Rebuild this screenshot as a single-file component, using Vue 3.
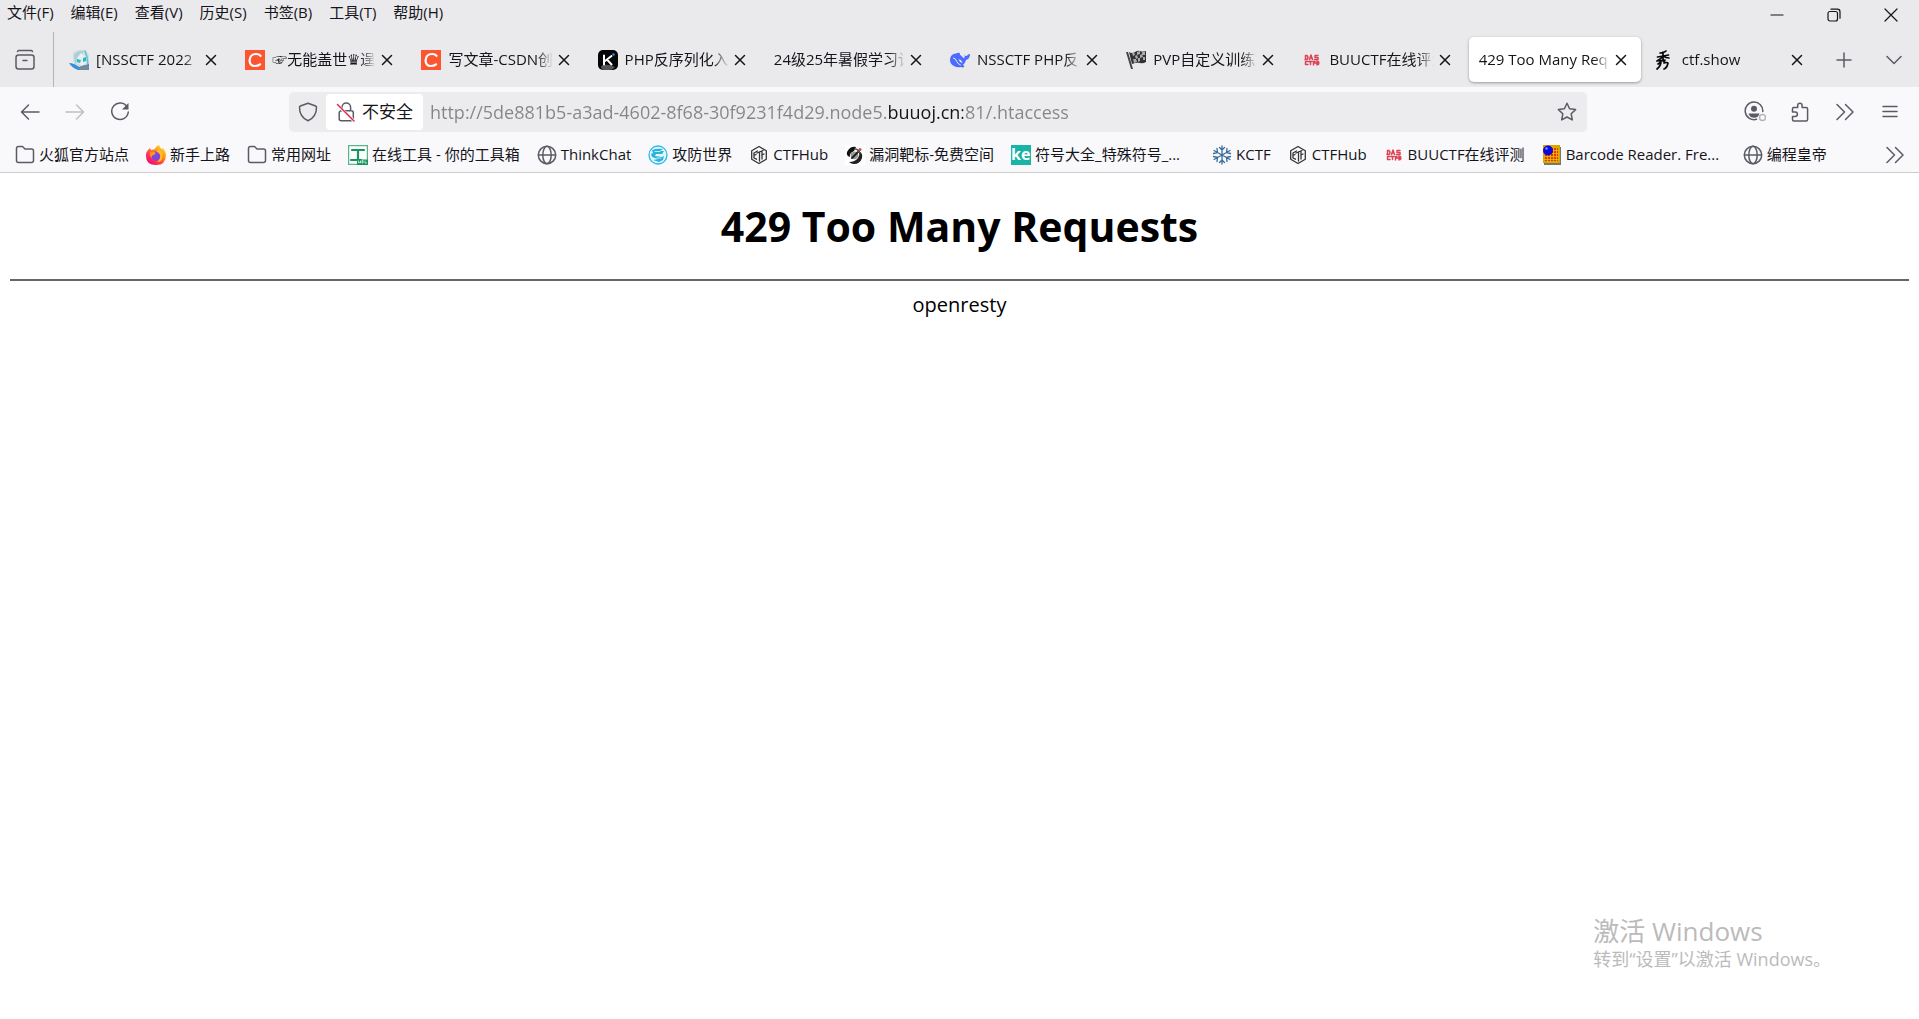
<template>
  <div class="browser">
    <header class="top">
      <div class="menubar">
        <nav class="menus" aria-label="菜单">
          <button v-for="m in menus" :key="m" type="button">{{ m }}</button>
        </nav>
        <div class="window-controls">
          <button type="button" aria-label="最小化">
            <svg width="14" height="14" viewBox="0 0 14 14"><path d="M1 7h12" /></svg>
          </button>
          <button type="button" aria-label="还原">
            <svg width="14" height="14" viewBox="0 0 14 14"><rect x="1" y="3.500" width="9.500" height="9.500" rx="2" /><path d="M4 1.200h6.300a2.700 2.700 0 0 1 2.700 2.700v6.300" /></svg>
          </button>
          <button type="button" aria-label="关闭">
            <svg width="14" height="14" viewBox="0 0 14 14"><path d="M1 1l12 12M13 1L1 13" /></svg>
          </button>
        </div>
      </div>

      <div class="tabstrip">
        <button class="firefox-view" type="button" aria-label="Firefox View">
          <svg width="22" height="22" viewBox="0 0 22 22"><path d="M3.500 2.500Q4 1.500 5 1.500h12q1 0 1.500 1" /><rect x="2" y="6" width="18" height="14" rx="2.500" /><path d="M9 11.500h4" /></svg>
        </button>
        <div class="tabs" role="tablist">
          <div v-for="t in tabs" :key="t.title" class="tab" :class="{ active: t.active }">
            <button class="tab-main" type="button" role="tab" :aria-selected="!!t.active">
              <svg v-if="t.icon" class="favicon" width="20" height="20" viewBox="0 0 20 20" v-html="icons[t.icon]" />
              <span class="tab-label">{{ t.title }}</span>
            </button>
            <button class="tab-close" type="button" aria-label="关闭标签页">
              <svg width="12" height="12" viewBox="0 0 12 12"><path d="M1.500 1.500l9 9M10.500 1.500l-9 9" /></svg>
            </button>
          </div>
        </div>
        <button class="strip-btn" type="button" aria-label="新建标签页">
          <svg width="16" height="16" viewBox="0 0 16 16"><path d="M8 1v14M1 8h14" /></svg>
        </button>
        <button class="strip-btn" type="button" aria-label="列出所有标签页">
          <svg width="16" height="16" viewBox="0 0 16 16"><path d="M1 4.500l7 7 7-7" /></svg>
        </button>
      </div>
    </header>

    <div class="toolbar">
      <div class="nav">
        <div class="nav-left">
          <button type="button" aria-label="后退">
            <svg width="20" height="20" viewBox="0 0 20 20"><path d="M19 10H2M8.500 3L1.500 10l7 7" /></svg>
          </button>
          <button type="button" aria-label="前进" disabled>
            <svg width="20" height="20" viewBox="0 0 20 20"><path d="M1 10h17M11.500 3l7 7-7 7" /></svg>
          </button>
          <button type="button" aria-label="刷新">
            <svg width="20" height="20" viewBox="0 0 20 20"><path d="M17.200 5A8.300 8.300 0 1 0 18.300 10" /><path d="M18.500 1v6.500H12z" fill="currentColor" stroke="none" /></svg>
          </button>
        </div>
        <div class="urlbar">
          <button class="shield" type="button" aria-label="跟踪保护">
            <svg width="20" height="20" viewBox="0 0 20 20"><path d="M10 1.200L17.600 4c.7.300.9.700.9 1.400 0 6-2.500 10.500-8.500 13.400C4 15.900 1.500 11.400 1.500 5.400c0-.7.200-1.100.9-1.400z" /></svg>
          </button>
          <button class="insecure" type="button">
            <svg width="20" height="20" viewBox="0 0 20 20"><path d="M6 8.500V5.200a4.300 4.300 0 0 1 8.600 0v3.300M4.500 8.800h10.800a2 2 0 0 1 2 2v6a2 2 0 0 1-2 2H5.200a2 2 0 0 1-2-2v-6q0-1 1.300-2z" /><path d="M1.500 3l16.500 16" stroke="#fff" stroke-width="3" /><path d="M1.500 2.500L18 19" stroke="#e22850" /></svg>
            <span>不安全</span>
          </button>
          <input class="url" type="text" aria-label="网址" value="http://5de881b5-a3ad-4602-8f68-30f9231f4d29.node5.buuoj.cn:81/.htaccess" />
          <button class="star" type="button" aria-label="添加书签">
            <svg width="20" height="20" viewBox="0 0 20 20"><path d="M10 1.300l2.600 5.500 6 .8-4.400 4.200 1.100 6.100L10 15l-5.300 2.900 1.100-6.100L1.400 7.600l6-.8z" /></svg>
          </button>
        </div>
        <div class="nav-right">
          <button type="button" aria-label="账户">
            <svg width="22" height="22" viewBox="0 0 22 22"><path d="M12.500 18.300A8.800 8.800 0 1 1 18.800 10.500" /><circle cx="10" cy="7.800" r="3" fill="currentColor" stroke="none" /><path d="M4.500 12.500h11q-1 4.200-5.500 4.200T4.500 12.500z" fill="currentColor" stroke="none" /><circle cx="18.500" cy="16.500" r="3" stroke="#b5b5ba" /></svg>
          </button>
          <button type="button" aria-label="扩展">
            <svg width="20" height="20" viewBox="0 0 20 20"><path d="M3.500 5.500h4.200V3.500a2.200 2.200 0 0 1 4.400 0v2h4q1.500 0 1.500 1.500v10.500q0 1.500-1.500 1.500H4Q2.500 19 2.500 17.500v-3h2.700a2.200 2.200 0 0 0 0-4.400H2.500V7q0-1.500 1-1.500z" /></svg>
          </button>
          <button type="button" aria-label="更多工具">
            <svg width="20" height="20" viewBox="0 0 20 20"><path d="M2 2.500L9.500 10 2 17.500M10.500 2.500L18 10l-7.500 7.500" /></svg>
          </button>
          <button type="button" aria-label="应用程序菜单">
            <svg width="20" height="20" viewBox="0 0 20 20"><path d="M3 4.500h14M3 9.500h14M3 14.500h14" /></svg>
          </button>
        </div>
      </div>

      <div class="bookmarks">
        <a v-for="(b, i) in bookmarks" :key="i" href="#" :class="{ cut: b.cut }">
          <svg class="favicon" width="20" height="20" viewBox="0 0 20 20" v-html="icons[b.icon]" />
          <span>{{ b.title }}</span>
        </a>
        <button type="button" aria-label="更多书签">
          <svg width="20" height="20" viewBox="0 0 20 20"><path d="M2 2.500L9.500 10 2 17.500M10.500 2.500L18 10l-7.500 7.500" /></svg>
        </button>
      </div>
    </div>

    <main class="page">
      <h1>429 Too Many Requests</h1>
      <hr>
      <p>openresty</p>
    </main>

    <aside class="activate">
      <div class="activate-title">激活 Windows</div>
      <div class="activate-hint">转到“设置”以激活 Windows。</div>
    </aside>
  </div>
</template>

<script setup>
const menus = ['文件(F)', '编辑(E)', '查看(V)', '历史(S)', '书签(B)', '工具(T)', '帮助(H)']

const tabs = [
  { title: '[NSSCTF 2022', icon: 'anime' },
  { title: '☞无能盖世♛逞何', icon: 'csdn' },
  { title: '写文章-CSDN创', icon: 'csdn' },
  { title: 'PHP反序列化入', icon: 'k' },
  { title: '24级25年暑假学习计' },
  { title: 'NSSCTF PHP反', icon: 'whale' },
  { title: 'PVP自定义训练场', icon: 'flag' },
  { title: 'BUUCTF在线评测', icon: 'das' },
  { title: '429 Too Many Req', active: true },
  { title: 'ctf.show', icon: 'show' }
]

const bookmarks = [
  { title: '火狐官方站点', icon: 'folder' },
  { title: '新手上路', icon: 'firefox' },
  { title: '常用网址', icon: 'folder' },
  { title: '在线工具 - 你的工具箱', icon: 'tool' },
  { title: 'ThinkChat', icon: 'globe' },
  { title: '攻防世界', icon: 'xctf' },
  { title: 'CTFHub', icon: 'hub' },
  { title: '漏洞靶标-免费空间', icon: 'target' },
  { title: '符号大全_特殊符号_...', icon: 'ke', cut: true },
  { title: 'KCTF', icon: 'snow' },
  { title: 'CTFHub', icon: 'hub' },
  { title: 'BUUCTF在线评测', icon: 'das' },
  { title: 'Barcode Reader. Fre...', icon: 'barcode', cut: true },
  { title: '编程皇帝', icon: 'globe' }
]

const icons = {
  anime: '<path d="M4 3Q8-1 17 0l3 5v15H9Q3 14 4 3z" fill="#cfdede"/><path d="M5 5q4-5 10-4l-3 6-6 7z" fill="#b0cfd5"/><path d="M8 8l4-5 5 4v6l-4 3-5-4z" fill="#e8efef"/><path d="M8 9l4 1-1 3-3-1zM14 8l3-1v4l-3 1z" fill="#27b8cb"/><path d="M16 1l2 6 1 8" stroke="#62c4d0" fill="none"/><path d="M0 13q5 0 10 4l10-3v6H9Q3 18 0 13z" fill="#398ed8"/><path d="M10 17l6-2 4 1v4h-9z" fill="#778a9a"/>',
  csdn: '<path d="M0 0h20v20H0z" fill="#fc5531"/><path d="M15.500 5.800Q14 4 11 4C7 4 4.800 6.900 4.600 10.300 4.400 13.800 6.500 16 10 16q3 0 5-1.700" fill="none" stroke="#fff" stroke-width="2.200"/>',
  k: '<rect width="20" height="20" rx="5" fill="#050505"/><path d="M3 16q6-3 14 1-2 3-6 3H6q-3 0-3-4z" fill="#555"/><path d="M6 5.500v9M13.500 6L7 11M9 9.500l4.500 5" fill="none" stroke="#fff" stroke-width="2"/><circle cx="15.500" cy="4.500" r="1.300" fill="#2c85f4"/>',
  whale: '<path d="M0 10Q0 4 6 3.500q2-1 4-.5-1 1.500 1 2.500l3 3q1-1 .5-4 .5 2 2 1.500Q18 4 20 4q0 5-4 6-1 3.500-3 5l1.500 1.500Q13 18 11 17q-4 1-7-1-4-2-4-6z" fill="#4d6bfe"/><path d="M1.500 8q3 0 4.500 3t4 4q-2 1-4 0-5-2-4.500-7z" fill="#4d6bfe"/><path d="M8.500 9.500q3-.5 4 3.500-3-.5-4-3.500z" fill="#eaeaec"/><path d="M3.500 8q2 0 3 3t4 4" fill="none" stroke="#eaeaec" stroke-width="1"/>',
  flag: '<path d="M0 2h2l5 17H5z" fill="#444"/><path d="M3 2q3 2 6 0t5-1 6 0v11q-3 2-6 1t-8 1z" fill="#333"/><path d="M6 3l2-1 1 3-2 1zm5-1 3-1v3l-3 1zm5 0 3 0v3h-3zM9 6l2-1 1 3-2 1zm5-1 2-1 1 3-3 1zM7 9l3 0 1 3-3 1zm5-1 2 0v3l-2 1zm5-1 2 0v3h-2z" fill="#aaa"/>',
  das: '<g fill="none" stroke="#dc4355"><path d="M3.500 5.500v4M3.500 5.500h1.500q2 2 0 4H3M7.500 9.500L9 5l1.500 4.500M8 8h2M16 5.500h-3v2h3v2h-3.500M6 11.500H3.500v3H6M7 11.500h3M8.500 11.500v3M11.500 15v-3.500h1.500M11.500 13h1.500M15 11v4M16.500 11.500v3M13.500 13h3.500"/></g>',
  show: '<g fill="none" stroke="#080808" stroke-width="1.700"><path d="M5 3q4 0 6-2M2.500 7q6-1 11-2M8 2v9M8 6q-2 3-6 5M8 6q3 2 6 2M4 11q4-1 6-1-1 2-1 3 3-1 4 0-1 5-4 6M6 11q0 5-4 8M3 14l3-2"/></g>',
  folder: '<path d="M1.500 15.500v-12q0-2 2-2h4l2.500 2.500h6.500q2 0 2 2v9.500q0 2-2 2h-13q-2 0-2-2z" fill="none" stroke="#5b5b66" stroke-width="1.500"/>',
  firefox: '<defs><linearGradient id="ff" x1="1" y1="0" x2=".2" y2="1"><stop stop-color="#fff44f"/><stop offset=".4" stop-color="#ff980e"/><stop offset=".7" stop-color="#ff3750"/><stop offset="1" stop-color="#eb0878"/></linearGradient></defs><path d="M2 5l2-2 1 2 4-1q0-2 4-4 1 3 3 4l1-1q3 4 3 7 0 10-10 10T0 11q0-4 2-6z" fill="url(#ff)"/><circle cx="10" cy="11" r="4.700" fill="#8044dc"/><path d="M4 7q3-1 6 1l-2 2q-3 0-2 3-3-2-2-6z" fill="#ff9524"/><path d="M13 4q5 4 3 10-1 3-5 3 4-3 3-7-1-3-4-3z" fill="#ffbd27"/>',
  tool: '<rect x=".5" y=".5" width="19" height="19" fill="#fff" stroke="#5ab58d"/><path d="M4 5h12M10 5v10M3 15h10" fill="none" stroke="#189660" stroke-width="2.200"/><path d="M9 14.500h11V20H9z" fill="#189660"/><path d="M10.500 16v2l1-1 1 1v-2M14 16v2h1v-2zM17 16v2h1.500" fill="none" stroke="#fff" stroke-width=".7"/>',
  globe: '<g fill="none" stroke="#5b5b66" stroke-width="1.500"><circle cx="10" cy="10" r="8.700"/><ellipse cx="10" cy="10" rx="4.200" ry="8.700"/><path d="M1.500 10h17"/></g>',
  xctf: '<circle cx="10" cy="10" r="9.500" fill="#e6f7fc"/><circle cx="10" cy="10" r="9" fill="none" stroke="#2eb9e6" stroke-width="1.300"/><path d="M4 5q5-2 11-1l-3 2h4l-2 3H8l-1 2 7 1 2-1-1 4-4 2-6-2 5-1-6-2-1-3 2-1z" fill="#29b2df"/><path d="M7 6.500h5M9 13h4" stroke="#e6faff" stroke-width=".8"/>',
  hub: '<g fill="none" stroke="#333" stroke-width="1.300"><path d="M10 1.500l7.300 4.200v8.600L10 18.500l-7.300-4.200V5.700z"/><path d="M8.500 6L5 8v5l2.500 1.200M8 8l6-2.500M10.500 7v9M13 6.800V14M13 10l2-1M5 10.500l2-1"/></g>',
  target: '<path d="M0 0h20v20H0z" fill="#fff"/><path d="M2 7q3-6 9-5l-2 4Q4 8 5 12 1 11 2 7z" fill="#111"/><path d="M14 6q4 2 3 7-2 6-8 6-3 0-5-2 6 0 9-4 2-3 1-7z" fill="#202020"/><path d="M6 8q4-3 7 0 1 4-2 6-4 1-5-2-1-2 0-4z" fill="#999"/><path d="M7 13l6-6" stroke="#222" stroke-width="2"/><circle cx="15" cy="4.500" r="1.500" fill="#e34334"/><path d="M10 4q3 0 5 4" fill="none" stroke="#555"/>',
  ke: '<path d="M0 0h20v20H0z" fill="#18b4a5"/><text x="0" y="15" fill="#fff" font-family="Open Sans, sans-serif" font-size="16" font-weight="700">ke</text>',
  snow: '<g fill="none" stroke="#376d9b" stroke-width="1.300"><path d="M10 1v18M2 5.500l16 9M2 14.500l16-9M7.500 2.500L10 5l2.500-2.500M7.500 17.500L10 15l2.500 2.500M1.500 8.500l4-1-.5-4M18.500 8.500l-4-1 .5-4M1.500 11.500l4 1-.5 4M18.500 11.500l-4 1 .5 4"/></g>',
  barcode: '<path d="M2 2h17v18H2z" fill="#777"/><path d="M1 0h17v18H1z" fill="#d9a400"/><path d="M3 3h13v13H3z" fill="#e03a00"/><path d="M5.500 2v15M8.500 2v15M11.500 2v15M14.500 2v15M2 5.500h15M2 8.500h15M2 11.500h15M2 14.500h15" stroke="#f0b400" stroke-width=".9"/><circle cx="6" cy="5.500" r="5" fill="#0909dd"/><circle cx="4.500" cy="3.500" r="1.300" fill="#7d92ff"/>'
}
</script>

<style>
body{margin:0;background:#fff}
</style>

<style scoped>
.browser{position:relative;min-height:100vh;color:#15141a;font:15px/20px "Open Sans","Noto Sans CJK SC",sans-serif;background:#fff}
button{display:flex;align-items:center;justify-content:center;padding:0;border:0;background:none;color:inherit;font:inherit}
svg{display:block;flex:none;fill:none;stroke:currentColor;stroke-width:1.5;stroke-linecap:round;stroke-linejoin:round}
.favicon{stroke:none}
.top{background:#eaeaec}
.menubar{display:flex;justify-content:space-between;height:32px}
.menus{display:flex;align-items:flex-start;gap:17px;padding:2px 7px}
.window-controls{display:flex;height:30px}
.window-controls button{width:57px}
.window-controls svg{stroke-width:1.2}
.tabstrip{display:flex;height:55px}
.firefox-view{width:54px;padding-right:3px;box-sizing:border-box;color:#5b5b66;border-right:1px solid #b4b4b8}
.tabs{display:flex;flex:1;min-width:0;padding:5px 0 5px 3px}
.tab{display:flex;align-items:center;flex:1 1 0;min-width:0;margin:0 2px;padding:0 9px 0 10px;border-radius:5px}
.tab.active{background:#fff;box-shadow:0 1px 3px rgba(0,0,0,.35)}
.tab-main{flex:1;min-width:0;gap:7px;justify-content:flex-start}
.tab-label{flex:1;min-width:0;padding-bottom:2px;overflow:hidden;white-space:nowrap;text-align:left;mask-image:linear-gradient(to left,transparent,#000 16px)}
.tab-close{width:22px;height:22px}
.strip-btn{width:50px;color:#5b5b66}
.toolbar{background:#f9f9fb;border-bottom:1px solid #ccc}
.nav{display:flex;align-items:center;height:50px}
.nav-left{display:flex;flex:282 1 0;padding-left:7px;color:#5b5b66}
.nav-left button{width:45px;height:40px}
.nav-left button:disabled{color:#bfbfc4}
.urlbar{display:flex;align-items:center;flex:1298 1 0;min-width:0;height:40px;border-radius:5px;background:#ececee}
.shield{width:37px;color:#5b5b66}
.insecure{gap:6px;height:36px;padding:0 10px;border-radius:4px;background:#fff;font-size:17px}
.insecure svg{color:#5b5b66}
.url{flex:1;min-width:0;padding:0 7px;border:0;outline:0;font:18px/24px "Open Sans","Noto Sans CJK SC",sans-serif;color:transparent;background:linear-gradient(to right,#858589 466px,#15141a 466px,#15141a 540px,#858589 540px);background-clip:text}
.star{width:40px;color:#5b5b66}
.nav-right{display:flex;justify-content:flex-end;flex:325 1 0;padding-right:7px;color:#5b5b66}
.nav-right button{width:45px;height:40px}
.bookmarks{display:flex;align-items:center;gap:17px;height:35px;padding:0 14px 0 15px}
.bookmarks a{display:flex;align-items:center;gap:4px;color:inherit;text-decoration:none;white-space:nowrap}
.bookmarks span{padding-bottom:2px}
.bookmarks .cut span{width:160px}
.bookmarks button{margin-left:auto;color:#5b5b66}
.page{padding:0 10px;color:#000;font-size:20px;line-height:26px;text-align:center}
.page h1{margin:0;padding:27px 0;font-size:41px;line-height:52px}
.page hr{height:0;margin:0;border:0;border-top:2px solid #666}
.page p{margin:0;padding:11px 0}
.activate{position:absolute;right:88px;bottom:48px;color:#bbb}
.activate-title{font-size:26px;line-height:32px}
.activate-hint{font-size:18px;line-height:24px}
</style>
